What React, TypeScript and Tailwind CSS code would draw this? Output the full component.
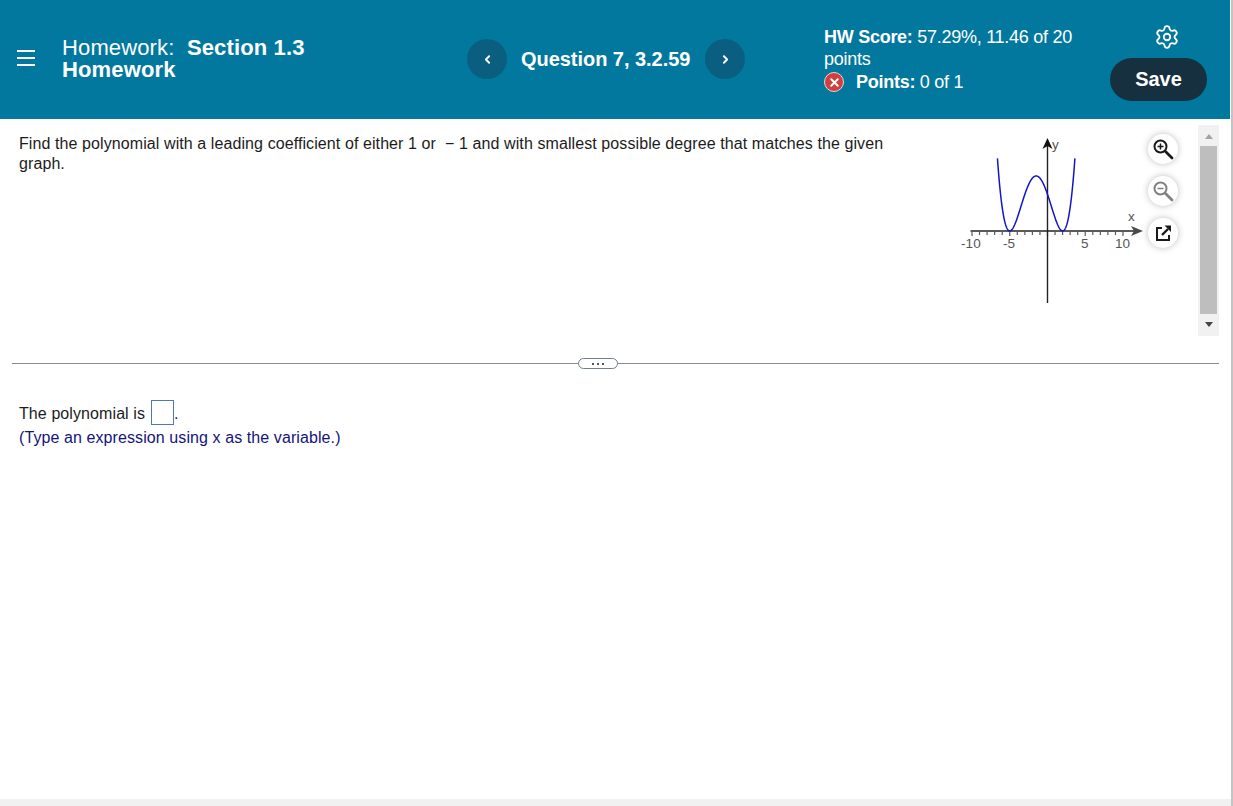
import { ChevronLeft, ChevronRight, Settings, X } from "lucide-react";

// axis scale read off the reference graph
const originX = 1047.5;
const originY = 231;
const unitX = 7.55;
const unitY = 0.367;

const curve = () => {
  const points: string[] = [];
  for (let x = -6.63; x <= 3.631; x += 0.06) {
    const y = (x + 5) ** 2 * (x - 2) ** 2;
    points.push(`${(originX + x * unitX).toFixed(2)},${(originY - y * unitY).toFixed(2)}`);
  }
  return points.join(" ");
};

const ticks = Array.from({ length: 21 }, (_, i) => i - 10);

const Graph = () => (
  <svg width="190" height="190" viewBox="955 125 190 190" className="ml-[56px] mt-[6px] shrink-0">
    {ticks.map((t) => (
      <line
        key={t}
        x1={originX + t * unitX}
        x2={originX + t * unitX}
        y1={originY}
        y2={originY + (t % 5 === 0 ? 5 : 4)}
        stroke="#5a5a5a"
        strokeWidth="1.2"
      />
    ))}
    <line x1="970.5" x2="1136" y1={originY} y2={originY} stroke="#5a5a5a" strokeWidth="2" />
    <path d="M1143 231 L1131 226 L1134 231 L1131 236 Z" fill="#4a4a4a" />
    <line x1={originX} x2={originX} y1="145" y2="303" stroke="#222" strokeWidth="1.4" />
    <path d="M1047.5 138 L1042.5 149 L1047.5 146 L1052.5 149 Z" fill="#111" />
    <polyline points={curve()} fill="none" stroke="#1414c8" strokeWidth="1.5" />
    <g fontFamily="'Liberation Sans', Arial, sans-serif" fontSize="13.5" fill="#555">
      <text x="1052" y="149">y</text>
      <text x="1128" y="221">x</text>
      <text x="961" y="248">-10</text>
      <text x="1003" y="248">-5</text>
      <text x="1081" y="248">5</text>
      <text x="1115" y="248">10</text>
    </g>
  </svg>
);

const ZoomIcon = ({ plus, color }: { plus: boolean; color: string }) => (
  <svg width="22" height="22" viewBox="0 0 22 22" fill="none" stroke={color}>
    <circle cx="8.5" cy="8.5" r="6" strokeWidth="2" />
    <line x1="5.5" x2="11.5" y1="8.5" y2="8.5" strokeWidth="1.5" />
    {plus && <line x1="8.5" x2="8.5" y1="5.5" y2="11.5" strokeWidth="1.5" />}
    <line x1="13.5" x2="20" y1="13.5" y2="20" strokeWidth="2.8" strokeLinecap="round" />
  </svg>
);

const ToolButton = ({ children }: { children: React.ReactNode }) => (
  <div className="flex h-[30px] w-[30px] items-center justify-center rounded-full bg-white shadow-[0_0_7px_rgba(0,0,0,0.25)]">
    {children}
  </div>
);

const NavButton = ({ children }: { children: React.ReactNode }) => (
  <div className="flex h-10 w-10 shrink-0 items-center justify-center rounded-full bg-[#0a5f80] text-white">
    {children}
  </div>
);

const Header = () => (
  <header className="flex h-[119px] w-[1230px] items-start bg-[#02789e] tracking-normal text-white">
    {/* Menu */}
    <div className="ml-[17px] mt-[50px] flex w-[18px] shrink-0 flex-col gap-[5px]">
      <div className="h-[2px] bg-white" />
      <div className="h-[2px] bg-white" />
      <div className="h-[2px] bg-white" />
    </div>

    {/* Title */}
    <div className="ml-[27px] mt-[37px] w-[250px] shrink-0 text-[22px] leading-[22px] tracking-[0.13px]">
      <div>
        Homework:&nbsp; <span className="font-bold">Section 1.3</span>
      </div>
      <div className="font-bold">Homework</div>
    </div>

    {/* Question nav */}
    <div className="ml-[155px] mt-[39px] flex shrink-0 items-center">
      <NavButton>
        <ChevronLeft size={13} strokeWidth={3.5} />
      </NavButton>
      <span className="ml-[14px] w-[170px] whitespace-nowrap text-[20px] font-bold leading-10 tracking-[-0.04px]">
        Question 7, 3.2.59
      </span>
      <div className="ml-[14px]">
        <NavButton>
          <ChevronRight size={13} strokeWidth={3.5} />
        </NavButton>
      </div>
    </div>

    {/* Score */}
    <div className="ml-[79px] mt-[26px] w-[260px] shrink-0 text-[18px] leading-[22px] tracking-[-0.27px]">
      <div>
        <span className="font-bold">HW Score:</span> 57.29%, 11.46 of 20
      </div>
      <div>points</div>
      <div className="mt-px flex items-center">
        <span className="flex h-5 w-5 items-center justify-center rounded-full border border-[#e8d5d5] bg-[#cf4040]">
          <X size={13} strokeWidth={3.5} />
        </span>
        <span className="ml-[12px]">
          <span className="font-bold">Points:</span> 0 of 1
        </span>
      </div>
    </div>

    {/* Settings and save */}
    <div className="ml-[26px] mt-[24px] flex w-[97px] shrink-0 flex-col items-center">
      <Settings size={26} strokeWidth={1.7} className="ml-[17px]" />
      <button className="mt-[8px] h-[43px] w-[97px] rounded-full bg-[#16303f] pb-[2px] text-[20px] font-bold text-white">
        Save
      </button>
    </div>
  </header>
);

const Scrollbar = () => (
  <div className="ml-[20px] mt-[6px] flex h-[211px] w-[21px] shrink-0 flex-col items-center bg-[#f1f1f1]">
    <div className="mt-[9px] h-0 w-0 border-x-[4px] border-b-[5px] border-x-transparent border-b-[#a3a3a3]" />
    <div className="mt-[7px] h-[168px] w-[17px] bg-[#bebebe]" />
    <div className="mt-[8px] h-0 w-0 border-x-[4px] border-t-[5px] border-x-transparent border-t-[#444]" />
  </div>
);

export default function App() {
  return (
    <div
      className="relative h-[806px] w-[1233px] overflow-hidden bg-white text-[16px] tracking-[0.09px] text-[#1c1c1c]"
      style={{ fontFamily: "'Liberation Sans', Arial, sans-serif" }}
    >
      <Header />

      {/* Question */}
      <div className="flex h-[217px] pl-[19px]">
        <p className="mt-[15px] w-[880px] shrink-0 leading-[20px]">
          Find the polynomial with a leading coefficient of either 1 or &nbsp;− 1 and with smallest possible degree that
          matches the given graph.
        </p>
        <Graph />
        <div className="ml-[3px] mt-[15px] flex w-[30px] shrink-0 flex-col gap-3">
          <ToolButton>
            <ZoomIcon plus color="#1a1a1a" />
          </ToolButton>
          <ToolButton>
            <ZoomIcon plus={false} color="#808080" />
          </ToolButton>
          <ToolButton>
            <svg width="20" height="20" viewBox="0 0 20 20" fill="none" stroke="#1a1a1a" strokeWidth="2">
              <path d="M9 5 H4 V17 H16 V12" />
              <path d="M9 12 L15 6" strokeWidth="2.4" />
              <path d="M11.5 2.5 H18 V9 Z" fill="#1a1a1a" stroke="none" />
            </svg>
          </ToolButton>
        </div>
        <Scrollbar />
      </div>

      {/* Divider */}
      <div className="relative ml-[12px] mt-[27px] h-px w-[1207px] bg-[#8a8a8a]">
        <div className="absolute left-[566px] top-[-5px] flex h-[11px] w-[40px] items-center justify-center gap-[3px] rounded-full border border-[#6f7f8f] bg-white">
          <span className="h-[2px] w-[2px] bg-[#555]" />
          <span className="h-[2px] w-[2px] bg-[#555]" />
          <span className="h-[2px] w-[2px] bg-[#555]" />
        </div>
      </div>

      {/* Answer */}
      <div className="ml-[19px] mt-[36px]">
        <div className="flex items-start">
          <span className="mt-[2px] leading-[24px]">The polynomial is</span>
          <span className="ml-[6px] h-[25px] w-[23px] border border-[#4a78b8]" />
          <span className="mt-[2px] leading-[24px]">.</span>
        </div>
        <div className="leading-[24px] text-[#14147a]">(Type an expression using x as the variable.)</div>
      </div>

      {/* Page edges */}
      <div className="absolute bottom-0 left-0 h-[7px] w-[1231px] bg-[#f1f1f1]" />
      <div className="absolute right-0 top-0 h-full w-[2px] bg-[#c4c4c4]" />
    </div>
  );
}
